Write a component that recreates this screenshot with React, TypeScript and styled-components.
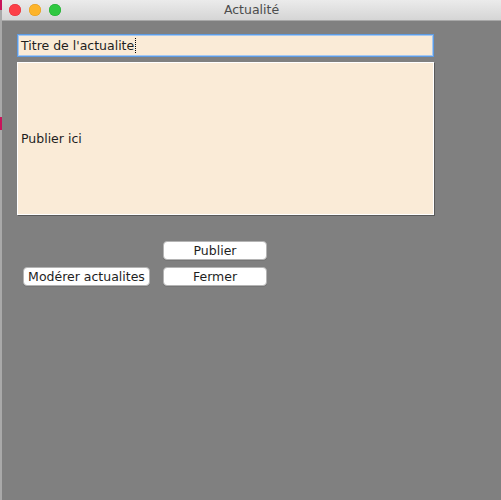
import React from "react";
import styled, { createGlobalStyle } from "styled-components";

const GlobalStyle = createGlobalStyle`
  html, body {
    margin: 0;
    padding: 0;
    background: #808080;
  }
  * {
    box-sizing: border-box;
  }
`;

const Window = styled.div`
  width: 501px;
  height: 500px;
  display: flex;
  flex-direction: column;
  font-family: "DejaVu Sans", "Noto Sans", sans-serif;
  font-size: 12px;
  color: #1e1e1e;
  border-left: 2px solid #a9a9a9;
  position: relative;
`;

const EdgeMark = styled.div<{ $top: number; $height: number }>`
  position: absolute;
  left: -2px;
  top: ${(p) => p.$top}px;
  width: 2px;
  height: ${(p) => p.$height}px;
  background: #c8145a;
`;

const TitleBar = styled.div`
  height: 21px;
  flex: none;
  display: flex;
  align-items: center;
  position: relative;
  background: linear-gradient(#ebebeb, #d5d5d5);
  border-bottom: 1px solid #a8a8a8;
`;

const Lights = styled.div`
  display: flex;
  gap: 8px;
  padding-left: 7px;
`;

const Light = styled.span<{ $color: string; $ring: string }>`
  width: 12px;
  height: 12px;
  border-radius: 50%;
  background: ${(p) => p.$color};
  box-shadow: inset 0 0 0 0.5px ${(p) => p.$ring};
`;

const Title = styled.div`
  position: absolute;
  left: 0;
  right: 0;
  top: 2px;
  text-align: center;
  font-size: 12.5px;
  color: #4c4c4c;
`;

const Content = styled.div`
  flex: 1;
  background: #808080;
  padding: 13px 0 0 15px;
  display: flex;
  flex-direction: column;
`;

const TitleField = styled.div`
  width: 417px;
  height: 23px;
  background: #faebd7;
  border: 1px solid #5d9be3;
  box-shadow: inset 0 0 0 1px #a6c8f0;
  display: flex;
  align-items: center;
  padding-left: 3px;
  font-size: 12.5px;
`;

const Caret = styled.span`
  display: inline-block;
  width: 1px;
  height: 15px;
  margin-left: 1px;
  background: repeating-linear-gradient(#000 0 1px, transparent 1px 2px);
`;

const Publish = styled.div`
  margin-top: 5px;
  width: 417px;
  height: 153px;
  background: #faebd7;
  border: 1px solid #ffffff;
  box-shadow: 1px 1px 0 #5a5a5a;
  display: flex;
  align-items: center;
  padding-left: 3px;
  font-size: 12.5px;
`;

const Buttons = styled.div`
  margin: 26px 0 0 6px;
  display: grid;
  grid-template-columns: 127px 104px;
  grid-auto-rows: 19px;
  column-gap: 13px;
  row-gap: 7px;
`;

const Button = styled.button<{ $col: number; $row: number }>`
  grid-column: ${(p) => p.$col};
  grid-row: ${(p) => p.$row};
  font-family: inherit;
  font-size: 12.5px;
  color: #1e1e1e;
  background: #ffffff;
  border: 1px solid #b4b4b4;
  border-radius: 4px;
  padding: 0;
  line-height: 17px;
  box-shadow: 0 0.5px 0 #6a6a6a;
`;

export default function App() {
  return (
    <>
      <GlobalStyle />
      <Window>
        <EdgeMark $top={0} $height={10} />
        <EdgeMark $top={117} $height={13} />
        <TitleBar>
          <Lights>
            <Light $color="#fc3f47" $ring="#e0303a" />
            <Light $color="#fdb42a" $ring="#e09a1e" />
            <Light $color="#2fc840" $ring="#22a832" />
          </Lights>
          <Title>Actualité</Title>
        </TitleBar>
        <Content>
          <TitleField>
            Titre de l'actualite
            <Caret />
          </TitleField>
          <Publish>Publier ici</Publish>
          <Buttons>
            <Button $col={2} $row={1}>Publier</Button>
            <Button $col={1} $row={2}>Modérer actualites</Button>
            <Button $col={2} $row={2}>Fermer</Button>
          </Buttons>
        </Content>
      </Window>
    </>
  );
}
